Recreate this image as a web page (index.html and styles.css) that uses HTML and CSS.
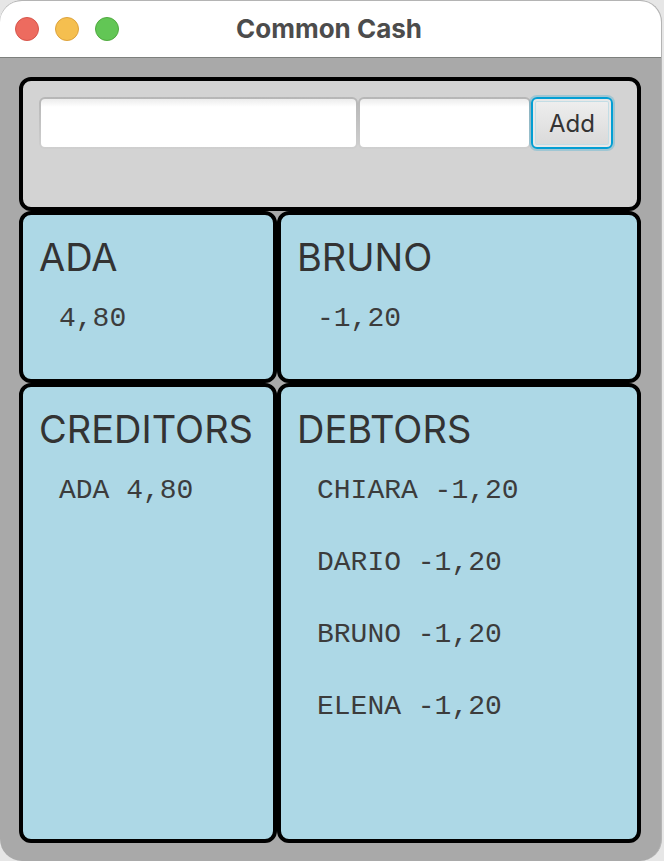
FILE: index.html
```html
<!DOCTYPE html>
<html lang="en">
<head>
<meta charset="utf-8">
<meta name="viewport" content="width=device-width, initial-scale=1">
<title>Common Cash</title>
<link rel="stylesheet" href="styles.css">
</head>
<body>
<div class="window">
  <header class="titlebar">
    <div class="controls">
      <button class="control close" type="button" aria-label="Close"></button>
      <button class="control minimize" type="button" aria-label="Minimize"></button>
      <button class="control maximize" type="button" aria-label="Zoom"></button>
    </div>
    <h1 class="title">Common Cash</h1>
  </header>
  <main class="board">
    <form class="entry">
      <input class="field" type="text" aria-label="Name">
      <input class="field" type="text" aria-label="Amount">
      <button class="add" type="button">Add</button>
    </form>
    <section class="card">
      <h2 class="heading">ADA</h2>
      <p class="value">4,80</p>
    </section>
    <section class="card">
      <h2 class="heading">BRUNO</h2>
      <p class="value">-1,20</p>
    </section>
    <section class="card">
      <h2 class="heading">CREDITORS</h2>
      <p class="value">ADA 4,80</p>
    </section>
    <section class="card">
      <h2 class="heading">DEBTORS</h2>
      <p class="value">CHIARA -1,20</p>
      <p class="value">DARIO -1,20</p>
      <p class="value">BRUNO -1,20</p>
      <p class="value">ELENA -1,20</p>
    </section>
  </main>
</div>
</body>
</html>
```

FILE: styles.css
```css
* {
  box-sizing: border-box;
}

body {
  margin: 0;
  background: #e6e6e6;
  color: #333;
  font-family: Inter, "Liberation Sans", sans-serif;
}

.window {
  display: flex;
  flex-direction: column;
  min-height: 100vh;
  margin-right: 2px;
  border: 1px solid #b4b4b4;
  border-width: 1px 1px 0 0;
  border-radius: 22px;
  background: #a9a9a9;
  overflow: hidden;
}

.titlebar {
  display: grid;
  grid-template-columns: 1fr auto 1fr;
  align-items: center;
  height: 57px;
  padding: 0 18px 0 15px;
  border-bottom: 1px solid #7d807d;
  background: #fff;
}

.controls {
  display: flex;
  gap: 16px;
}

.control {
  width: 24px;
  height: 24px;
  padding: 0;
  border: 1px solid;
  border-radius: 50%;
}

.close {
  border-color: #d6554b;
  background: #ed6b5f;
}

.minimize {
  border-color: #dca23c;
  background: #f5bf4f;
}

.maximize {
  border-color: #50a93f;
  background: #62c655;
}

.title {
  margin: 0;
  color: #4c4c4c;
  font-size: 26px;
  font-weight: 700;
  line-height: 32px;
}

.board {
  display: grid;
  flex: 1;
  grid-template-columns: minmax(0, 258fr) minmax(0, 364fr);
  grid-template-rows: auto auto 1fr;
  padding: 19px 20px 18px 19px;
}

.entry,
.card {
  border: 4px solid #000;
  border-radius: 12px;
}

.entry {
  display: grid;
  grid-column: 1 / -1;
  grid-template-columns: minmax(0, 320fr) minmax(0, 174fr) auto;
  padding: 16px 24px 58px 16px;
  background: #d3d3d3;
}

.field {
  width: 100%;
  height: 52px;
  padding: 8px 14px;
  border: 2px solid transparent;
  border-radius: 6px;
  background:
    linear-gradient(#ececec, #fff 8px) padding-box,
    linear-gradient(#b6b6b6, #cfcfcf) border-box;
  font: inherit;
  font-size: 24px;
  outline: none;
}

.add {
  height: 52px;
  padding: 0 16px;
  border: 2px solid #039ed3;
  border-radius: 6px;
  background: linear-gradient(#efefef, #d9d9d9);
  box-shadow: 0 0 0 2px #039ed340, inset 0 0 0 2px #e8e8e8, inset 0 0 0 3px #c3dde5;
  color: #333;
  font: inherit;
  font-size: 24px;
}

.card {
  padding: 16px 16px 24px;
  background: #add8e6;
}

.heading {
  margin: 0;
  font-size: 38px;
  font-weight: 400;
  line-height: 52px;
}

.value {
  margin: 0;
  padding: 20px;
  color: #3c3c3c;
  font-family: "Liberation Mono", monospace;
  font-size: 28px;
  line-height: 32px;
  white-space: nowrap;
}
```
